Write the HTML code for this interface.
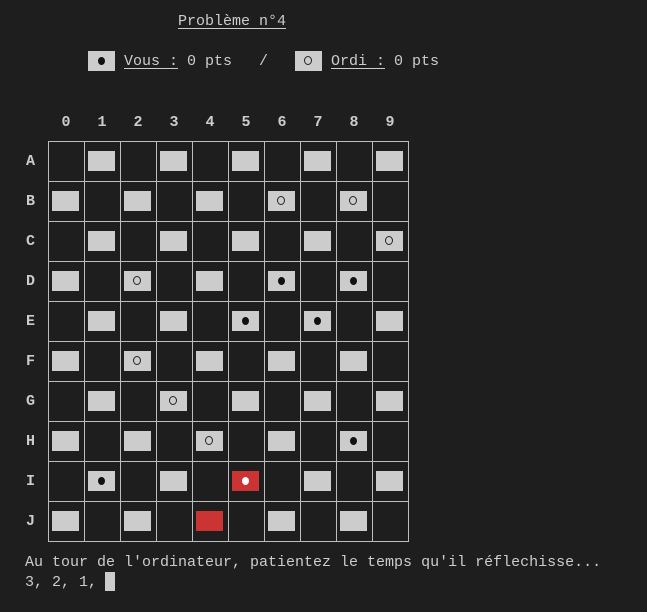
<!DOCTYPE html>
<html><head><meta charset="utf-8"><style>
body{margin:0;width:647px;height:612px;background:#1e1e1e;overflow:hidden;position:relative;font-family:"Liberation Mono",monospace;font-size:15px;color:#cccccc}
.t{position:absolute;white-space:pre;line-height:20px}
.u{text-decoration:underline;text-underline-offset:3px}
#g{position:absolute;left:48px;top:141px;width:361px;height:401px;
background-image:repeating-linear-gradient(90deg,#bdbdbd 0 1px,transparent 1px 36px),repeating-linear-gradient(180deg,#bdbdbd 0 1px,transparent 1px 40px)}
.p{position:absolute;width:27px;height:20px;background:#cccccc}
.r{background:#cc3333}
.f:after{content:"";position:absolute;left:10px;top:6px;width:7px;height:8px;border-radius:50%;background:#111}
.o:after{content:"";position:absolute;left:9px;top:5px;width:6px;height:7px;border-radius:50%;border:1px solid #222}
.r.f:after{background:#fff}
.cl{position:absolute;top:113px;width:36px;text-align:center;font-weight:bold;line-height:20px}
.rl{position:absolute;left:26px;font-weight:bold;line-height:20px}
</style></head><body>
<div class="t u" style="left:178px;top:12px">Problème n°4</div>
<div class="p f" style="left:88px;top:51px"></div>
<div class="t" style="left:124px;top:52px"><span class="u">Vous :</span> 0 pts   /</div>
<div class="p o" style="left:295px;top:51px"></div>
<div class="t" style="left:331px;top:52px"><span class="u">Ordi :</span> 0 pts</div>

<div class="cl" style="left:48px">0</div><div class="cl" style="left:84px">1</div><div class="cl" style="left:120px">2</div><div class="cl" style="left:156px">3</div><div class="cl" style="left:192px">4</div><div class="cl" style="left:228px">5</div><div class="cl" style="left:264px">6</div><div class="cl" style="left:300px">7</div><div class="cl" style="left:336px">8</div><div class="cl" style="left:372px">9</div>
<div class="rl" style="top:152px">A</div><div class="rl" style="top:192px">B</div><div class="rl" style="top:232px">C</div><div class="rl" style="top:272px">D</div><div class="rl" style="top:312px">E</div><div class="rl" style="top:352px">F</div><div class="rl" style="top:392px">G</div><div class="rl" style="top:432px">H</div><div class="rl" style="top:472px">I</div><div class="rl" style="top:512px">J</div>

<div id="g"></div>
<div class="p" style="left:88px;top:151px"></div><div class="p" style="left:160px;top:151px"></div><div class="p" style="left:232px;top:151px"></div><div class="p" style="left:304px;top:151px"></div><div class="p" style="left:376px;top:151px"></div>
<div class="p" style="left:52px;top:191px"></div><div class="p" style="left:124px;top:191px"></div><div class="p" style="left:196px;top:191px"></div><div class="p o" style="left:268px;top:191px"></div><div class="p o" style="left:340px;top:191px"></div>
<div class="p" style="left:88px;top:231px"></div><div class="p" style="left:160px;top:231px"></div><div class="p" style="left:232px;top:231px"></div><div class="p" style="left:304px;top:231px"></div><div class="p o" style="left:376px;top:231px"></div>
<div class="p" style="left:52px;top:271px"></div><div class="p o" style="left:124px;top:271px"></div><div class="p" style="left:196px;top:271px"></div><div class="p f" style="left:268px;top:271px"></div><div class="p f" style="left:340px;top:271px"></div>
<div class="p" style="left:88px;top:311px"></div><div class="p" style="left:160px;top:311px"></div><div class="p f" style="left:232px;top:311px"></div><div class="p f" style="left:304px;top:311px"></div><div class="p" style="left:376px;top:311px"></div>
<div class="p" style="left:52px;top:351px"></div><div class="p o" style="left:124px;top:351px"></div><div class="p" style="left:196px;top:351px"></div><div class="p" style="left:268px;top:351px"></div><div class="p" style="left:340px;top:351px"></div>
<div class="p" style="left:88px;top:391px"></div><div class="p o" style="left:160px;top:391px"></div><div class="p" style="left:232px;top:391px"></div><div class="p" style="left:304px;top:391px"></div><div class="p" style="left:376px;top:391px"></div>
<div class="p" style="left:52px;top:431px"></div><div class="p" style="left:124px;top:431px"></div><div class="p o" style="left:196px;top:431px"></div><div class="p" style="left:268px;top:431px"></div><div class="p f" style="left:340px;top:431px"></div>
<div class="p f" style="left:88px;top:471px"></div><div class="p" style="left:160px;top:471px"></div><div class="p r f" style="left:232px;top:471px"></div><div class="p" style="left:304px;top:471px"></div><div class="p" style="left:376px;top:471px"></div>
<div class="p" style="left:52px;top:511px"></div><div class="p" style="left:124px;top:511px"></div><div class="p r" style="left:196px;top:511px"></div><div class="p" style="left:268px;top:511px"></div><div class="p" style="left:340px;top:511px"></div>

<div class="t" style="left:25px;top:553px">Au tour de l'ordinateur, patientez le temps qu'il réflechisse...</div>
<div class="t" style="left:25px;top:573px">3, 2, 1, </div>
<div style="position:absolute;left:105px;top:572px;width:10px;height:19px;background:#cccccc"></div>
</body></html>
